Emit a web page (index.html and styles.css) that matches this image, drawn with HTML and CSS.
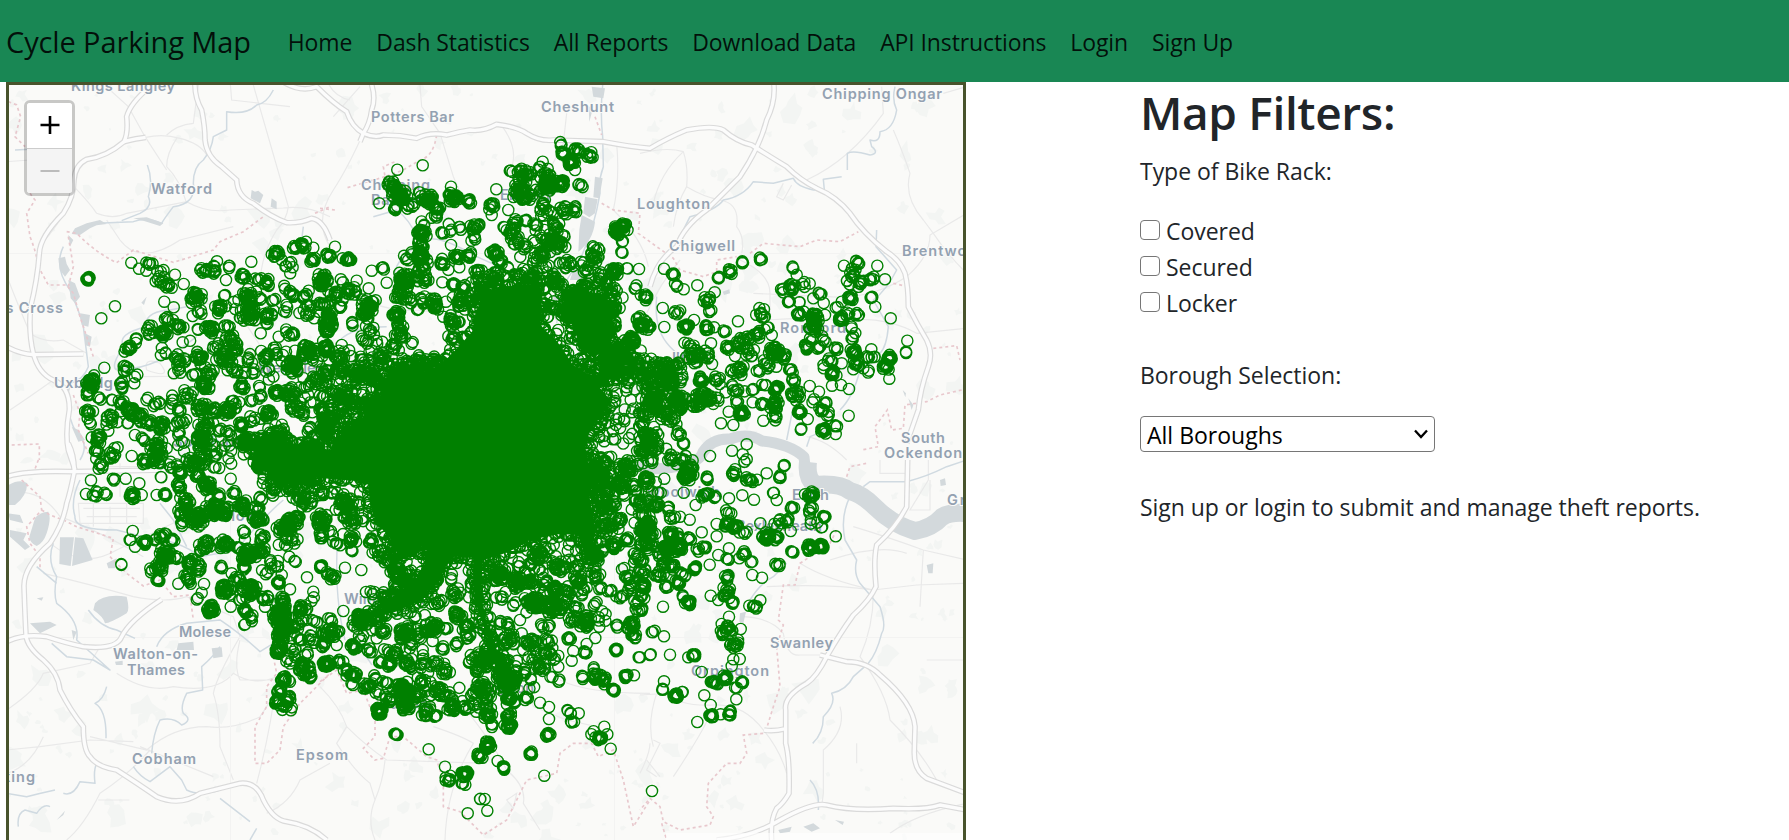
FILE: index.html
```html
<!DOCTYPE html>
<html lang="en">
<head>
<meta charset="utf-8">
<title>Cycle Parking Map</title>
<link rel="stylesheet" href="styles.css">
</head>
<body>
<nav class="navbar">
  <a class="brand">Cycle Parking Map</a>
  <a class="link">Home</a>
  <a class="link">Dash Statistics</a>
  <a class="link">All Reports</a>
  <a class="link">Download Data</a>
  <a class="link">API Instructions</a>
  <a class="link">Login</a>
  <a class="link">Sign Up</a>
</nav>
<main class="content">
  <div class="map">
    <svg class="map-canvas" viewBox="9 85 954 755" width="954" height="755">
      <defs>
        <g id="motorways">
          <g transform="translate(0 80) scale(.33333)">
            <path d="M585 0Q582 50 605 90Q615 140 615 180Q620 230 665 260L710 300Q712 350 760 370Q810 410 860 428Q900 430 935 415Q970 420 990 480"/>
            <path d="M450 20Q390 70 380 110Q385 160 372 185Q320 230 260 238Q225 255 222 300Q222 350 190 400Q120 470 118 520Q112 600 92 680Q85 760 100 820Q115 880 160 900Q210 920 208 990Q195 1060 205 1110L225 1170"/>
            <path d="M372 185Q410 175 437 172M20 800Q60 822 100 824L250 822"/>
          </g>
          <g transform="translate(320 80) scale(.33333)">
            <path d="M-120 0Q-60 40 -10 20Q40 70 80 95Q95 140 130 160Q165 175 190 165Q240 165 290 175Q330 155 380 165Q420 155 450 150Q490 155 530 133Q590 140 620 160Q660 185 700 180L850 185Q930 200 990 205Q1040 175 1100 150Q1180 135 1210 150Q1250 185 1295 195Q1350 230 1400 260Q1440 300 1490 325Q1550 350 1590 400Q1630 460 1700 515Q1740 540 1755 580Q1765 620 1765 680Q1790 730 1820 780Q1840 820 1825 860Q1800 930 1795 990L1760 1090"/>
            <path d="M150 0Q170 50 155 90Q150 130 130 160L120 185M1360 0Q1370 60 1340 120Q1320 200 1260 290Q1210 340 1160 390Q1090 440 1070 500Q1010 540 990 620"/>
          </g>
          <g transform="translate(0 460) scale(.33333)">
            <path d="M205 -50Q225 -10 222 40Q210 100 200 130Q190 190 150 250Q70 320 72 380Q75 470 78 525Q80 560 130 600Q175 640 180 690Q210 750 250 800Q250 870 270 890Q290 920 350 930Q420 975 470 1010Q540 1040 600 1000Q680 980 720 970Q770 965 790 1020Q820 1080 860 1085Q930 1095 980 1140"/>
            <path d="M20 545Q70 520 140 530Q200 550 250 560Q350 570 365 530Q390 480 485 418M20 50Q80 30 220 35L500 30"/>
          </g>
          <g transform="translate(640 460) scale(.33333)">
            <path d="M803 0L800 140Q770 200 710 255Q700 300 708 380Q690 420 640 465Q600 520 560 590Q530 650 500 670Q430 710 437 750L437 850Q450 900 447 1000Q430 1030 410 1045Q390 1080 395 1140M540 585L620 605Q680 605 720 645Q820 730 825 800L823 870Q820 930 860 955L980 1000M230 1140Q340 1130 420 1080Q520 1025 560 1035Q640 1055 760 1045Q860 1050 900 1035L980 1050M372 810Q400 815 437 806"/>
          </g>
        </g>
      </defs>
      <rect class="land" x="9" y="85" width="954" height="755"/>
      <g id="woods" class="woods"></g>

      <g class="minor">
        <g transform="translate(0 80) scale(.33333)">
          <path d="M330 30L385 80L435 170L500 270M500 165Q530 135 580 130L595 15M437 172Q490 160 540 175Q600 190 620 225M760 15L865 380Q860 420 830 450Q780 530 780 620M20 245L90 240M530 175Q500 220 500 260Q540 300 560 370M222 320Q270 370 290 400Q340 420 380 400L560 365Q620 400 690 390L850 384Q920 375 990 410M118 500Q180 430 222 350M320 420L360 480Q420 560 540 480L700 440M25 600Q60 690 90 760Q130 790 190 780L260 820M160 900Q90 950 30 990M430 890L900 885M440 870Q430 830 480 850Q520 900 440 870M560 620Q630 700 700 680Q760 760 800 830M690 0L695 60L870 80"/>
        </g>
        <g transform="translate(320 80) scale(.33333)">
          <path d="M130 160Q80 270 40 330Q-20 420 30 500M300 15L305 80L360 160L400 290L440 380M540 130Q610 220 560 290M740 100L730 190Q690 270 650 340M120 20L40 110M20 0Q40 50 90 60M890 190Q900 300 880 390Q970 480 985 560M60 600Q150 700 300 690Q400 710 480 700"/>
        </g>
        <g transform="translate(640 80) scale(.33333)">
          <path d="M0 220Q80 200 130 215Q145 260 140 320Q110 370 100 440M130 215Q60 280 40 370M140 320Q190 350 240 360Q300 370 290 440Q320 480 300 540Q390 580 390 640V720M725 20L730 100Q630 240 500 300M760 150Q790 220 810 280Q790 350 850 420L880 460Q920 520 970 570M980 400L870 465Q870 530 800 590Q690 660 560 650L340 640M380 720Q500 710 620 720Q740 710 830 760L980 745M430 310L410 350L430 360L455 315M910 40L980 20M500 1070Q560 1080 620 1140M160 1000Q200 930 260 1000M20 700Q60 610 120 540"/>
        </g>
        <g transform="translate(0 460) scale(.33333)">
          <path d="M235 130H430V190H240ZM250 145H420M260 170H410M280 130V200M330 140V190M380 130V190M20 100Q120 80 180 170Q290 210 430 290M150 250Q250 330 350 270L560 170M130 340Q260 370 400 410Q500 430 560 410L700 470L720 530Q650 650 640 700Q660 760 660 860L700 960M350 640Q440 700 520 680Q650 700 700 640Q760 680 830 650M20 750Q110 690 130 640L270 610L300 560M270 830L440 870Q520 800 620 800Q700 810 780 770Q830 700 835 650M20 870L120 860L270 840L400 845M450 870Q390 940 300 1000Q250 1100 200 1140M720 540Q700 620 720 660H840M770 970Q810 820 830 660M800 1060Q870 1030 900 960L990 910M420 860L640 950M20 940Q90 920 130 830"/>
          <path d="M295 1020H388M360 10V110M300 20H480M560 0L620 90L700 110"/>
        </g>
        <g transform="translate(320 460) scale(.33333)">
          <path d="M0 680Q60 740 80 800Q140 860 200 900L500 910M80 800L50 850Q100 930 150 970L165 1020Q140 1080 165 1140M195 900Q190 960 165 1020M340 800Q430 830 460 850Q380 980 375 1140M430 740Q520 850 560 930Q620 980 610 1030L660 1110M720 660Q800 700 990 700M560 1020L590 1000L580 1045ZM960 940Q990 880 990 850M620 660L640 740L740 780L830 800"/>
        </g>
        <g transform="translate(640 460) scale(.33333)">
          <path d="M370 810Q310 730 220 735Q120 740 80 700L0 705M370 810Q420 870 440 940M380 380Q560 370 700 390L830 375L980 370M480 310Q560 360 700 390M300 470Q390 470 430 520Q440 590 480 585H560M700 400Q700 500 660 590Q740 700 750 780Q840 870 890 960M600 740Q620 810 550 870V1000L545 1040M640 200Q740 230 850 270L980 300M570 300Q720 250 800 280M720 0V40H800M865 0V60L810 150H870V60M40 840L60 850L20 930L50 950M20 900L60 950M750 1120Q830 1060 980 1030M50 700Q20 790 40 860M650 850V910M860 600H980M100 950Q200 800 220 740M850 270L840 440"/>
        </g>
      </g>
      <path class="grid" d="M9 253.500H963M9 637.500H963M230.500 460V840M614.500 460V840"/>

      <g class="rivers">
        <g transform="translate(0 80) scale(.33333)">
          <path d="M820 30Q800 70 770 75Q740 105 680 95V150L640 170Q635 210 610 240Q580 260 580 310Q590 370 520 380Q490 420 485 430Q440 410 400 425L290 430L220 455M442 255Q460 300 445 350Q460 380 420 400L365 422M45 210L90 208M910 440L905 480M190 500Q160 560 210 630Q240 700 250 740L265 860Q250 900 210 910Q190 990 230 1060Q270 1090 240 1140M500 690Q430 700 440 740Q350 760 370 800Q330 860 350 870M350 865Q450 880 590 770M510 690L560 680"/>
        </g>
        <g transform="translate(320 80) scale(.33333)">
          <path d="M848 15Q840 100 848 170L850 260Q835 300 840 340Q820 460 770 560Q730 600 720 660L710 730M160 410L230 390Q270 420 290 470M230 640Q200 550 290 500Q320 440 470 530L560 570M60 780Q100 740 200 740M700 980Q800 900 780 830L830 870"/>
        </g>
        <g transform="translate(640 80) scale(.33333)">
          <path d="M765 20Q755 60 770 90Q760 150 720 155Q720 190 690 180L695 200Q720 220 690 225Q640 210 622 220V270M605 290L550 298L553 330H520Q470 320 460 295L400 310L340 305Q310 350 250 360Q230 390 150 410L120 470M710 450L708 500L770 570Q740 630 700 660L745 740Q740 800 720 820L660 870Q640 950 600 990M500 1100L510 1070L560 1050M50 650Q40 750 90 800L130 840M440 1080L460 980"/>
        </g>
        <g transform="translate(0 460) scale(.33333)">
          <path d="M240 60Q210 120 225 170Q220 210 350 210L430 230Q540 240 600 290L710 270Q780 180 850 120M160 250Q140 300 170 350Q160 400 170 430Q240 480 230 540L330 630L280 600L200 590L155 550M265 450Q300 500 350 510L405 535M110 320L170 370M470 560Q490 510 560 490L660 480Q720 520 780 575L820 550M660 560Q640 590 605 620L608 690L560 700Q540 740 550 760Q580 780 545 795Q520 770 480 780Q460 820 455 880M320 680Q310 720 285 730Q320 750 318 835M400 920Q420 950 450 965L510 920L545 960L560 990Q600 1010 660 990M660 1015L750 1085M20 1000L80 1010Q120 1000 165 990M290 910Q280 930 285 970L240 965Q220 1010 190 1000M55 1100Q50 1060 75 1050L110 1060Q130 1030 150 1040M770 1105L750 1140M480 130L520 180L560 260"/>
        </g>
        <g transform="translate(640 460) scale(.33333)">
          <path d="M630 110Q600 170 615 240L650 300Q640 340 660 370L720 440Q740 500 725 520Q710 580 685 610L640 650Q620 690 575 700Q590 730 550 770Q550 820 518 850M510 960Q540 990 535 1050M670 80L690 65H800Q860 50 920 20L980 0M330 420Q360 370 400 350L440 310"/>
        </g>
        <path d="M337 550Q335 600 345 640M355 640L372 665"/>
      </g>

      <g class="water">
        <g transform="translate(0 80) scale(.33333)">
          <path d="M755 330L765 335L775 332L790 345L780 370L752 355ZM815 355L830 365V388L812 380ZM225 445L260 430L300 420L320 432L290 436L270 445L240 465L215 462ZM400 415L440 412L490 430L480 438L430 422ZM175 535L195 530L200 552L210 570L195 590L180 570ZM205 600L225 610L240 650L225 670L212 655ZM240 700L270 705L265 740L245 735ZM255 760L275 770L270 800L255 795ZM440 650L432 675L424 668ZM205 465L220 480L210 500ZM215 1040L235 1050L255 1080L235 1085Z"/>
        </g>
        <g transform="translate(320 80) scale(.33333)">
          <path d="M825 290L848 295L838 355L820 352ZM795 350L833 358L825 400L808 412L790 400ZM785 405L825 425Q820 480 775 515L778 450ZM760 570L790 555L785 600L750 600ZM700 650L730 640L725 700L705 720ZM815 20L855 25L850 55L820 50ZM806 80L820 80L808 125Z"/>
        </g>
        <g transform="translate(640 80) scale(.33333)"><path d="M248 635L268 628L270 640L252 645ZM788 930L798 940L796 952ZM805 955L820 975L815 990Z"/></g>
        <g transform="translate(0 460) scale(.33333)">
          <path d="M25 75Q60 55 82 70Q80 110 45 135H25ZM105 175Q120 155 145 155Q155 175 140 220Q130 250 110 258Q90 250 88 230ZM180 232L222 232L212 318L178 312ZM225 232L250 235L278 300L216 318ZM285 430Q310 400 380 410Q390 450 380 460Q330 490 315 490Q310 470 280 450ZM25 160L60 165L70 190L30 180ZM30 210L80 220L70 240L90 260L75 270L30 230ZM535 550L580 545L582 570H530ZM635 565L665 562L668 590L640 595ZM90 490L150 485L170 495L120 520ZM110 415L130 412L125 422ZM320 310L350 295L345 325L325 325ZM170 1080L195 1052L190 1065ZM215 510L230 515L220 540ZM345 605L368 602V615H348Z"/>
        </g>
        <g transform="translate(640 460) scale(.33333)"><path d="M415 1110L455 1100L450 1115L420 1120ZM490 1100L520 1090L540 1105L515 1115ZM585 1080L612 1085L608 1095ZM860 315L880 310L878 340L865 340ZM900 60L915 55L918 75L902 78ZM300 460L318 455L310 490L298 485Z"/></g>
        <path class="thames" d="M630 465Q655 472 680 466Q700 462 703 452Q712 438 730 439Q748 432 762 441Q790 444 804 457Q806 478 812 483"/>
        <path class="thames wide" d="M808 462Q806 478 815 485Q840 483 850 491Q862 494 875 507Q893 525 915 531Q932 528 942 517Q950 512 965 513"/>
      </g>

      <g class="borders">
        <g transform="translate(0 80) scale(.33333)"><path d="M25 65L50 75L62 110L45 170L75 200M90 340L105 360L80 400L90 470Q110 520 115 560L145 615L200 615L220 640L240 710L280 830M200 455L230 460Q290 520 350 548L400 510L520 547L640 510L660 485L730 455L790 410M205 470L220 560L205 620M945 400L990 380M220 945L240 1000L235 1050L265 1120M35 1095L118 1092V1140"/></g>
        <g transform="translate(320 80) scale(.33333)"><path d="M350 165Q340 230 300 240L250 270L195 290L190 260L225 245M195 290L75 325M0 385L45 390M825 110L845 165M845 370L880 390L960 400L955 460L1010 500L1060 535L1080 570L1150 590L1190 575V540L1250 530M1290 520L1330 490L1440 500L1490 480L1560 485L1615 455M1720 610L1755 618"/></g>
        <g transform="translate(640 80) scale(.33333)"><path d="M880 805L950 797L960 840M965 930L900 945L860 965L795 975L790 1045L755 1050L742 990L705 1040L715 1100L665 1110"/></g>
        <g transform="translate(0 460) scale(.33333)"><path d="M65 60L120 110L125 150L80 200L90 250L120 290V330M125 150L150 165L190 180L230 200L340 235L330 290L380 340L430 378L480 360L520 410L570 405L580 480M115 0L100 40M820 590L830 640L800 680L800 740L765 800V910L800 910L840 870L850 800L900 730L990 640"/></g>
        <g transform="translate(320 460) scale(.33333)"><path d="M0 665L50 630L80 700L130 690L165 780L165 830L130 865L165 900L190 895L210 830L250 830L320 890L350 900L370 960V1040L420 1055L490 1125L560 1080L620 960L710 940L720 880L760 850L815 850L835 890L880 870L910 960L940 1100L990 1020"/></g>
        <g transform="translate(640 460) scale(.33333)"><path d="M620 50L630 20L680 10M590 210L570 250L480 310L465 375L430 375L415 480L430 495L410 560L420 680L400 740L380 805L370 820L310 825L320 880L300 910L260 910L205 970L200 1040L220 1070L210 1095L120 1110L70 1085L60 1040L30 1015L0 1050M65 1090L80 1140"/></g>
      </g>

      <use href="#motorways" class="road-case"/>
      <use href="#motorways" class="road-fill"/>

      <g class="labels">
        <text x="71" y="91" textLength="104">Kings Langley</text>
        <text x="371" y="122" textLength="83">Potters Bar</text>
        <text x="541" y="112" textLength="73">Cheshunt</text>
        <text x="822" y="99" textLength="120">Chipping Ongar</text>
        <text x="151" y="194" textLength="61">Watford</text>
        <text x="361" y="190" textLength="69">Chipping</text>
        <text x="371" y="205" textLength="50">Barnet</text>
        <text x="500" y="200" textLength="50">Enfield</text>
        <text x="637" y="209" textLength="73">Loughton</text>
        <text x="669" y="251" textLength="66">Chigwell</text>
        <text x="902" y="256" textLength="84">Brentwood</text>
        <text x="-54" y="313" textLength="117">Gerrards Cross</text>
        <text x="54" y="388" textLength="68">Uxbridge</text>
        <text x="258" y="373" textLength="66">Wembley</text>
        <text x="173" y="447" textLength="66">Southall</text>
        <text x="672" y="363" textLength="36">Ilford</text>
        <text x="780" y="333" textLength="66">Romford</text>
        <text x="901" y="443" textLength="44">South</text>
        <text x="884" y="458" textLength="78">Ockendon</text>
        <text x="183" y="521" textLength="74">Hounslow</text>
        <text x="646" y="497" textLength="74">Woolwich</text>
        <text x="792" y="500" textLength="37">Erith</text>
        <text x="736" y="531" textLength="86">Bexleyheath</text>
        <text x="947" y="505" textLength="90">Gravesend</text>
        <text x="344" y="604" textLength="80">Wimbledon</text>
        <text x="179" y="637" textLength="52">Molese</text>
        <text x="113" y="659" textLength="85">Walton-on-</text>
        <text x="127" y="675" textLength="58">Thames</text>
        <text x="770" y="648" textLength="63">Swanley</text>
        <text x="691" y="676" textLength="78">Orpington</text>
        <text x="472" y="693" textLength="62">Croydon</text>
        <text x="380" y="709" textLength="48">Sutton</text>
        <text x="132" y="764" textLength="64">Cobham</text>
        <text x="296" y="760" textLength="52">Epsom</text>
        <text x="-23" y="782" textLength="58">Woking</text>
      </g>
      <path id="core" class="core"/>
      <path id="racks" class="racks"/>
      <rect class="credit" x="666" y="833" width="297" height="7"/>
    </svg>
    <div class="zoom">
      <button class="zoom-btn"><svg width="20" height="20" viewBox="0 0 20 20"><path d="M.5 10H19.5M10 1V19"/></svg></button>
      <button class="zoom-btn off"><svg width="20" height="20" viewBox="0 0 20 20"><path d="M.5 10H19.5"/></svg></button>
    </div>
  </div>
  <section class="filters">
    <h2 class="title">Map Filters:</h2>
    <p class="caption">Type of Bike Rack:</p>
    <div class="options">
      <label class="option"><input class="box" type="checkbox"><span>Covered</span></label>
      <label class="option"><input class="box" type="checkbox"><span>Secured</span></label>
      <label class="option"><input class="box" type="checkbox"><span>Locker</span></label>
    </div>
    <p class="caption borough">Borough Selection:</p>
    <div class="select"><span>All Boroughs</span><svg width="14" height="10" viewBox="0 0 14 10"><path d="M1 1.5L7 8L13 1.5"/></svg></div>
    <p class="caption note">Sign up or login to submit and manage theft reports.</p>
  </section>
</main>
<script src="map.js"></script>
</body>
</html>
```

FILE: styles.css
```css
* { box-sizing: border-box; }
body { margin: 0; height: 840px; overflow: hidden; background: #fff; color: #212529; font-family: "Open Sans", "Noto Sans", sans-serif; font-size: 23px; line-height: 36px; }
.navbar { display: flex; align-items: center; height: 82px; padding: 1px 0 0 6px; background: #198754; color: rgba(0, 0, 0, .88); white-space: nowrap; }
.brand { font-size: 29px; margin-right: 37px; letter-spacing: -.12px; }
.link { margin-right: 24px; letter-spacing: -.11px; }
.content { display: flex; height: 758px; }
.map { position: relative; flex: none; width: 960px; height: 780px; margin-left: 6px; border: 3px solid #48532c; overflow: hidden; }
.map-canvas { display: block; }
.land { fill: #fafaf8; }
.woods { fill: #f3f5f3; }
.minor { fill: none; stroke: #e9e9e9; stroke-width: 3.5; }
.grid { fill: none; stroke: #f3f3f2; }
.rivers { fill: none; stroke: #d0dae1; stroke-width: 4.5; stroke-linejoin: round; }
.rivers > path { stroke-width: 1.4; }
.water { fill: #d3d9dc; }
.water .thames { fill: none; stroke: #d3d9dc; stroke-width: 11; stroke-linejoin: round; }
.water .wide { stroke-width: 18; }
.borders { fill: none; stroke: #e8c8cd; stroke-width: 5; stroke-dasharray: 9 9; }
.road-case { fill: none; stroke: #dadada; stroke-width: 17; }
.road-fill { fill: none; stroke: #fcfcfc; stroke-width: 10; }
.labels { font-family: "Inter", "Open Sans", sans-serif; font-size: 14.5px; font-weight: 600; fill: #93a1b1; stroke: #fafaf8; stroke-width: 2px; paint-order: stroke; }
.core { fill: #008000; }
.racks { fill: none; stroke: #008000; stroke-width: 1.4; }
.credit { fill: #fff; fill-opacity: .6; }
.zoom { position: absolute; left: 15px; top: 15px; width: 51px; height: 96px; border: 3px solid rgba(0, 0, 0, .2); border-radius: 6px; background-clip: padding-box; display: flex; flex-direction: column; overflow: hidden; }
.zoom-btn { flex: 1; display: grid; place-items: center; border: 0; padding: 0; background: #fff; }
.zoom-btn svg { fill: none; stroke: #000; stroke-width: 2.6; }
.zoom-btn.off { background: #f4f4f4; border-top: 1px solid #ccc; }
.zoom-btn.off svg { stroke: #bbb; stroke-width: 2; }
.filters { margin-left: 174px; white-space: nowrap; }
.title { margin: 1px 0 0; font-size: 46px; font-weight: 600; line-height: 58px; letter-spacing: -.35px; }
.caption { margin: 12px 0 0; line-height: 36px; letter-spacing: -.04px; }
.options { margin-top: 24px; }
.option { display: flex; align-items: center; height: 36px; gap: 6px; letter-spacing: -.04px; }
.box { appearance: none; width: 20px; height: 20px; margin: 0 0 3px; border: 1px solid #767676; border-radius: 4px; background: #fff; }
.borough { margin-top: 36px; }
.select { display: flex; align-items: center; justify-content: space-between; width: 295px; height: 36px; margin-top: 23px; padding: 2px 6px 0; border: 1px solid #767676; border-radius: 4px; color: #000; }
.select svg { fill: none; stroke: #000; stroke-width: 2.3; margin-bottom: 2px; }
.note { margin-top: 37px; }
```

FILE: map.js
```js
let seed = 20231;
const rnd = () => { seed = (seed * 1664525 + 1013904223) >>> 0; return seed / 4294967296; };
const gauss = () => (rnd() + rnd() + rnd() - 1.5) * 1.3;

// Solid central area, where the rack markers merge completely.
const core = [493,290,507,286,535,284,543,290,541,310,540,325,560,345,573,365,590,375,601,374,600,355,584,346,573,330,569,312,573,300,584,292,600,293,610,301,614,312,610,335,612,350,618,372,600,388,612,402,600,415,590,430,585,450,590,470,600,478,598,485,588,492,596,530,592,550,585,556,578,535,560,534,530,540,517,548,500,555,483,560,480,590,487,625,497,650,512,668,512,680,504,685,499,668,486,655,488,640,475,600,473,575,474,558,455,556,430,585,423,600,395,612,358,622,357,618,380,610,390,598,415,585,430,565,427,550,418,545,405,553,397,548,390,538,376,522,370,505,368,482,320,478,290,476,274,470,262,460,250,447,255,441,275,440,330,450,336,436,350,432,362,420,370,402,386,392,394,372,430,371,450,356,472,332,476,310,485,300];
const poly = [];
for (let i = 0; i < core.length; i += 2) poly.push([core[i], core[i + 1]]);
const inside = (x, y, p) => {
  let c = false;
  for (let i = 0, j = p.length - 1; i < p.length; j = i++) {
    if ((p[i][1] > y) !== (p[j][1] > y) && x < (p[j][0] - p[i][0]) * (y - p[i][1]) / (p[j][1] - p[i][1]) + p[i][0]) c = !c;
  }
  return c;
};
document.getElementById("core").setAttribute("d", "M" + poly.map(p => p.join(" ")).join("L") + "Z");

let d = "";
const ring = (x, y) => { d += `M${(x - 5.6).toFixed(1)} ${y.toFixed(1)}a5.6 5.6 0 1 0 11.2 0a5.6 5.6 0 1 0 -11.2 0`; };

// Ragged rim of the solid area.
for (let i = 0; i < poly.length; i++) {
  const a = poly[i], b = poly[(i + 1) % poly.length];
  const n = Math.ceil(Math.hypot(b[0] - a[0], b[1] - a[1]) / 2.4);
  for (let k = 0; k < n; k++) ring(a[0] + (b[0] - a[0]) * k / n + gauss() * 3.5, a[1] + (b[1] - a[1]) * k / n + gauss() * 3.5);
}

// Areas of medium density: polygon and marker count.
const areas = [
  ["360,485 400,540 440,545 520,550 540,570 510,580 475,570 440,590 395,590 380,560 350,520", 60],
  ["365,600 430,590 468,580 480,640 455,645 430,630 400,640 360,640", 20],
  ["330,630 360,625 450,640 450,655 400,650 340,655", 8],
  ["375,660 450,660 450,680 490,700 460,715 400,705 360,690", 18],
  ["490,565 600,565 600,575 565,600 600,610 590,625 560,600 530,615 500,600", 22],
  ["500,630 560,635 555,690 520,690 500,650", 12],
  ["240,450 280,475 320,485 360,500 350,540 320,530 290,500 260,495", 12],
  ["180,430 240,430 240,470 180,465", 22],
  ["320,345 360,330 385,360 390,380 350,400 330,420 310,440 300,390", 50],
  ["360,362 430,360 380,400 330,430 310,440 330,400", 110],
  ["575,395 640,405 655,425 650,470 620,475 590,460 580,440", 75],
  ["610,340 640,350 672,372 682,400 640,405 600,390", 70],
  ["465,270 560,265 570,300 545,320 480,310", 55],
  ["530,215 560,220 560,285 525,280", 20],
  ["600,480 655,475 660,500 640,520 610,540", 22],
  ["240,350 320,340 330,400 250,430 230,400", 14],
  ["130,320 240,340 240,430 180,420 130,400", 8],
  ["540,540 610,540 600,575 550,570", 26],
  ["545,465 600,480 598,540 560,540", 40]
];
for (const [s, n] of areas) {
  const p = s.split(" ").map(q => q.split(",").map(Number));
  const xs = p.map(q => q[0]), ys = p.map(q => q[1]);
  const x0 = Math.min(...xs), x1 = Math.max(...xs), y0 = Math.min(...ys), y1 = Math.max(...ys);
  for (let k = 0, t = 0; k < n && t < 9000; t++) {
    const x = x0 + rnd() * (x1 - x0), y = y0 + rnd() * (y1 - y0);
    if (inside(x, y, p)) { ring(x, y); k++; }
  }
}

// Marker groups per map tile, in thirds of a pixel: x, y, count, spread.
const tiles = [
  [0, 80, `394 548;417 566;450 555 6 14;480 572 3 8;525 584;478 600 6 14;500 613 9 12;551 612;493 665;521 682;265 597 9 6;345 679;304 715;586 650 22 13;598 688 4 9;578 708;614 576 10 9;645 568 7 11;651 544;688 560 3 8;678 600;755 546 2 3;728 588 8 7;770 598 4 9;800 608 7 9;828 520 12 7;845 540;872 562 6 14;885 502 5 7;908 495 10 8;940 503;918 485;938 545 9 9;986 526 5 5;657 686 14 12;678 645 2 5;708 660 2 5;706 687;748 650 20 15;746 700 35 15;722 715 2 4;780 655 3 8;826 650 3 14;848 625 2 6;875 642 9 10;910 646 8 10;960 605 14 16;852 685 5 12;925 692 14 16;970 670 4 10;808 706 12 12;800 730 2 5;782 760;836 770;868 760 5 12;880 765 4 6;985 710 10 10;984 745 9 9;975 800 9 12;925 815 32 17;885 812;505 717 5 8;536 735 10 11;490 758 22 10;452 750 9 12;410 778 5 4;382 805 10 10;548 787;488 815 4 8;540 840 14 13;594 745 2 4;630 745 16 10;683 740 5 10;597 830 16 11;645 800 5 10;688 780 12 12;672 830 26 17;700 800 10 12;540 868 4 7;582 885 4 7;746 835 5 9;760 878 4 10;730 880 3 10;700 870 8 12;625 885 10 12;615 915 18 12;560 945 6 12;570 940 4 7;800 830 10 13;830 815 7 12;805 865 3 7;880 860 30 15;725 922 12 10;780 925 2 5;780 950 3 7;754 962 2 4;828 938 12 8;868 940 24 17;885 985 14 12;910 1003 3 6;910 920 5 14;945 900 10 10;967 950 2 4;965 990 8 8;925 1048 4 10;980 1040 20 18;313 863;375 868 7 9;408 886 2 6;365 905 3 5;368 925 5 5;403 910;275 905 26 12;265 940 5 8;298 953 3 5;264 992 8 9;270 1025 3 8;335 960 3 7;365 970 7 9;385 990 16 13;330 1015 12 16;420 1010 12 12;382 1030 2 4;325 1052;292 1078 14 11;290 1112 5 6;348 1100 3 6;335 1125 9 9;443 957 2 3;462 975 3 8;482 965 3 7;518 957 2 4;510 980 2 6;540 990 6 9;450 1025 8 12;485 1038 16 10;530 1025 4 12;555 1025 4 9;605 985 15 13;645 990 10 12;688 990 22 13;700 965 4 9;615 1040 20 15;605 1085 32 18;655 1050 3 6;683 1055 4 9;540 1065 3 8;405 1065;430 1078 5 8;475 1100 22 15;470 1130 14 13;395 1128;535 1095;650 1125 2 5;600 1130 14 12;685 1100 4 10;755 1020 6 10;725 1038 10 11;805 1000 16 12;735 1080 30 16;785 1090 32 18;840 1070 40 25;930 1110 50 25`],
  [320, 80, `232 269;308 256;178 370;220 318 25 13;240 350 22 14;227 387 8 6;270 375 6 12;294 340 2 6;325 355 22 14;350 385 12 11;345 408 4 8;393 320;400 353 22 11;447 366 7 6;529 328;518 376 10 10;515 405;565 390;575 277 3 8;612 285 22 16;600 335 25 14;625 345 12 14;668 245;668 265 4 11;680 290 18 14;682 320 26 14;660 330 6 10;725 310 20 10;722 190 3 6;730 220 6 10;771 210 9 9;752 248 18 9;808 225 9 8;765 270;781 315 5 9;670 375 10 10;663 398 3 8;690 395 4 8;730 390 10 10;765 390 7 9;705 440 10 9;310 430 3 6;303 460 20 12;303 490 10 11;303 530 30 10;308 560 14 12;316 597 9 12;368 460 3 5;385 430 2 4;392 455 2 5;417 448 4 6;464 440 10 9;478 434 2 5;393 495;458 470 4 8;365 550 12 13;413 532 10 9;450 525 7 8;418 562;258 535 4 7;275 520 2 5;550 440 2 5;573 450 12 12;585 425 5 8;615 422 4 6;650 438 3 4;585 485 9 13;526 520 17 10;540 545 7 12;563 562 2 6;618 500 6 10;600 530 2 3;636 548 2 5;665 525 17 14;690 480 18 20;720 490 12 15;735 465 3 8;738 555 12 12;600 590 8 10;825 530 16 10;830 505 5 9;800 560 9 12;783 545;840 590 11 13;883 575 18 8;905 485 2 4;902 518 2 3;893 455 22 9;910 440 20 9;923 565 2 4;957 567;475 575 8 9;400 612 7 7;435 622 7 8;367 607;415 662 12 12;485 610 12 14;520 595 20 20;378 665;255 600 30 15;240 640 16 14;290 600 6 10;265 655 5 9;305 660 6 10;340 665 10 11;347 680 12 8;290 690 3 6;232 705 16 10;236 740 8 11;242 768 12 12;280 787 2 4;225 800 9 9;155 572;190 568 4 6;200 608;146 625;110 602;65 605 3 6;45 500;30 528 4 3;85 537 12 10;10 600 16 12;50 645 14 14;90 635 14 12;60 682 3 6;15 675 7 9;150 675 25 14;140 700 22 12;98 730 3 6;25 725 17 10;25 755 5 8;160 760 9 17;135 785 4 8;170 785 2 5;20 800 7 8;58 830 12 10;92 828;65 795;125 835 3 7;185 835 15 13;118 885 26 15;150 890 16 12;10 880 12 17;60 870 15 17;20 910 3 7;65 945 16 13;8 950;100 975 12 10;68 990 4 8;10 990 5 8;30 1020 16 11;85 1050 16 14;20 1060 12 13;370 710;400 725 18 12;395 770 8 8;440 660 18 20;485 650 24 20;300 840 16 14;340 850 18 15;640 590 18 15;700 600 16 9;720 630;700 680 14 12;683 713 2 3;715 750;750 772 2 4;790 620 14 13;760 640 20 14;860 620 18 14;890 650 8 13;885 740 4 6;865 760 15 15;930 780 28 13;955 850 10 13;945 620 3 5;970 650 6 8;950 715 5 6;965 735 9 9;985 740 4 6;780 845 7 10;805 860 4 8;745 700 26 18;800 780 18 16;750 660 20 18;870 690 20 16;860 840 30 25;900 820 30 25;920 870 30 25;250 870 30 22;200 920 35 22;160 980 35 22;130 1040 35 22`],
  [640, 80, `72 566;99 583 5 4;108 615 3 4;131 628;172 616;235 594 4 4;270 571 7 7;309 546 5 4;361 541 4 5;224 637;204 655 8 9;208 688 3 5;15 654 4 5;68 684;10 735 12 12;73 741;113 703 5 9;140 743 12 8;162 720;200 742 8 9;222 742;213 790;294 724;364 697 8 10;378 710 2 7;385 745 3 8;352 765 9 12;395 765;250 760 3 9;150 795 6 10;165 830 26 16;200 825 7 10;216 852;262 800 7 9;300 795 14 15;330 815 8 12;285 828;405 815 28 13;435 827 7 9;385 850 7 11;409 860;355 873 3 4;325 775 5 10;298 870 12 12;275 870 3 7;232 902 8 8;180 895 12 11;190 950 32 15;170 970 14 12;225 960 5 8;257 937;293 928 9 12;290 965 3 6;340 928 3 6;372 915 3 8;410 925 14 7;403 975 22 13;370 972 4 7;405 1012 5 6;370 1022;338 967;303 1000 22 8;266 995;243 1030;280 1035;455 870 4 7;462 900 6 9;470 945 12 13;509 918;537 935;455 945 2 6;478 993 12 7;503 1017;482 1048 3 3;520 960 2 6;555 965 3 6;547 988 5 8;565 1003 3 6;552 1050 15 7;588 1040 3 8;587 1062;626 1007;459 562 3 5;470 584;430 630 5 9;457 620 10 9;498 613 4 8;442 663 4 5;476 665 2 4;536 640 4 7;520 655;551 669;472 704 6 6;490 700 2 6;522 715 20 10;520 740 18 11;500 800 8 7;515 780 4 6;550 775 4 8;540 800 4 7;555 705;587 685 2 5;612 557;652 548 5 5;712 557;640 578 12 9;660 608 9 7;695 592 5 8;735 598;620 605 3 6;630 655 12 8;605 665;694 650 5 6;706 680;650 703 4 6;628 705 3 8;602 716 11 8;633 743 2 4;640 770 4 8;643 815 18 9;648 850 8 8;680 830 3 7;700 830 3 6;694 808;640 868;670 865;685 875 2 4;752 715;802 782;799 818 4 3;748 835 14 7;738 862 12 7;748 896;588 805 4 7;570 845 5 10;578 880 14 8;550 860 2 5;576 917;603 915;627 927;605 850;45 860 8 15;75 860 14 14;105 860 12 13;25 900 26 25;80 900 45 18;40 960 50 20;110 965 40 18;10 1000 12 14;130 895 4 10;75 1000 18 14;100 1020 6 10;10 1030 5 8;30 1070 20 15;15 1100 22 17;60 1105 8 14;115 1067 5 7;132 1092 3 5;90 1130 4 8;130 1135 7 10;210 1128;276 1112;320 1093;308 1123;320 1138;432 1155 2 4`],
  [0, 460, `273 61;258 102;285 102 5 7;318 104 3 5;300 15 7 12;340 58 3 6;377 56;418 70;398 107 12 8;425 105;435 5 10 10;470 0 8 10;485 48 2 5;515 15 6 11;540 35 9 7;540 80 12 9;580 10 16 14;592 45 7 8;615 75 18 12;645 25 2 4;692 56;700 98 5 7;470 105;495 105 7 6;555 130 16 12;550 155 10 13;545 190 4 7;590 175 45 17;640 150 35 17;670 155 20 14;655 110 6 9;728 135 22 12;770 145 7 9;782 115 4 7;772 180 25 11;398 213;393 237 2 5;405 260;435 247 10 7;465 238 2 5;490 225 8 13;520 235 5 9;498 285 32 12;525 290 4 8;475 320 16 10;455 332 3 6;473 358 5 4;363 313 2 2;535 371;615 250 12 13;605 270 5 7;672 255 18 11;570 310 14 11;595 325 10 10;563 350 8 9;570 370 3 6;612 372;590 415 2 4;605 398;663 320 4 6;630 447 22 9;675 390 28 11;710 360 9 8;692 440;695 340;735 225 4 9;715 260 5 6;750 285 38 15;785 270 14 12;790 230 7 12;855 200 38 15;885 180 20 12;860 240 10 14;880 240 3 8;730 325 6 9;820 320 8 12;795 335 4 9;838 367 8 6;868 290;882 303 2 4;845 345;870 388;921 352;962 320 4 3;985 340 4 7;750 390 38 16;720 415 3 8;798 415 7 8;795 440;735 450 10 6;750 475 5 7;737 493 2 5;940 395;935 418 2 5;848 425 14 13;840 465 65 14;850 500 45 14;845 530 20 12;835 570 26 9;905 445 14 12;900 480 8 14;880 500 8 14;945 485 4 6;900 540 6 9;930 540 7 9;975 525 6 10;970 555 4 8;985 475;918 583 3 5;880 575 7 10;865 600 4 8;905 620 12 10;920 635 12 12;930 652 5 6;975 612 16 6;852 655 14 8;870 665;840 690 10 8;832 724 12 6;865 718 12 9;855 740 6 9;878 745 2 4;905 120 16 14;930 120 6 10;965 100 6 8;960 180 28 14;965 230 4 8;830 90 6 12;870 75 18 16;810 70 12 15;780 15 14 12;840 40 30 20;930 60 30 20;780 0 30 20;840 0 40 25;900 20 50 30`],
  [320, 460, `75 323;124 330;40 352 8 8;5 320 4 5;5 230 4 5;30 215 3 8;50 250 5 7;95 235 12 10;95 272 3 5;85 165 14 14;75 130 30 18;120 128 4 6;40 95 4 8;10 100 3 6;100 190 7 12;150 245 7 11;180 280 12 13;210 300 12 14;230 335 20 14;260 345 12 13;138 396;160 400 4 9;225 385 8 9;265 385 12 12;195 410 12 12;70 453;130 480 30 11;170 470 12 12;30 480 3 8;42 515 16 12;10 520 4 10;15 550 3 6;50 555;102 560 10 8;110 500 4 8;125 525 3 7;150 568 5 7;190 513 9 9;170 535;255 520 30 13;335 505 30 17;300 520 10 12;270 550 6 10;308 570;230 580 8 9;210 575 4 9;210 610 9 10;180 610 5 8;265 610 12 10;310 605 8 12;345 610 9 12;375 635 9 9;365 565 5 7;410 550 4 7;380 505 5 9;415 465 14 10;400 405 10 14;355 430 6 10;440 500 8 10;450 530 5 6;435 520 4 8;22 612 18 8;60 605 5 8;85 635 9 10;100 645 12 8;97 675 2 4;142 675 14 10;165 650 4 10;173 698 3 6;200 665 4 8;245 690 38 17;255 740 28 12;180 755 26 8;210 710 9 11;290 705 12 12;310 665 10 13;350 690 16 14;385 710 8 12;395 740 22 10;430 738 7 9;318 755 14 9;350 766 4 5;455 700 4 5;470 740 5 10;485 680 20 14;500 710 9 10;500 740 6 12;505 765 14 9;512 795 4 5;490 600 32 16;470 630 9 12;455 600 4 8;545 640 16 10;555 680 14 12;575 660 42 14;565 720 14 9;585 725 4 6;563 765 9 9;565 800 14 10;620 717 4 5;660 728;687 741;687 777;633 660 2 4;660 620 14 12;645 595 8 16;685 575 8 14;715 620;690 652 2 5;720 662 3 5;715 587;760 573;755 602;795 580 5 6;800 552;826 534;746 535 6 5;600 480;540 485 4 5;560 495 5 6;565 540 18 14;605 520;630 545 16 12;685 540 4 7;690 495 3 6;665 495 3 8;580 430 3 8;538 410 4 6;492 385 2 5;495 412 2 4;495 350 4 9;625 365 16 10;590 365 28 14;540 345 28 15;640 430 45 15;690 440 34 15;720 440 14 12;680 365 7 8;705 390 26 10;740 395 14 12;775 360 12 10;790 390 8 11;822 345 6 9;845 388 3 6;870 395 3 8;900 410 5 8;770 443 6 6;823 435 4 7;855 455 2 6;845 475 3 8;797 485 22 12;760 480 9 12;838 500;890 497 4 4;935 495 18 10;942 525 6 7;950 425 5 7;948 455 3 6;889 570 7 5;956 592;990 585;928 380 7 8;925 350 8 10;970 380 7 7;960 335 6 8;950 300 8 13;910 320 2 5;885 260 18 10;920 240 7 8;850 270 3 8;855 200 18 14;820 290 26 16;770 320 7 12;720 320 20 15;900 178 10 9;887 133 3 6;955 125 6 7;985 120 4 6;970 170 4 7;970 210 14 11;990 260 10 12;915 25 30 15;900 75 24 12;950 80 6 12;975 50 5 10;790 650 3 5;830 650 20 12;855 660 8 8;822 625 3 6;918 650 7 7;942 646;885 688 7 7;750 755 4 7;757 780 3 6;776 760;817 818 2 4;853 800;862 823;837 835 14 7;872 866;228 825 6 4;326 868;504 855 22 8;480 888 9 6;533 903;552 923 7 4;633 880 8 5;684 825 9 7;375 920;385 957 8 7;437 942 18 8;434 970 3 5;673 947;480 1016 2 3;494 1017;443 1060;502 1052;610 640 5 10;545 600 10 12;520 320 8 14;300 270 5 10;340 290 14 10;250 250 40 25;370 250 35 20;330 350 40 20;290 380 35 18;650 280 35 22;850 130 35 25;840 30 40 25;850 80 30 20`],
  [640, 460, `36 993;32 583;90 584;72 529;41 519 3 4;69 440;0 592;72 664;67 687 3 4;110 707 18 7;128 697 2 4;162 587 12 5;145 592;185 636;193 706;172 786;212 735;215 765 11 6;242 763;272 760 8 7;289 718;308 666 5 4;290 680 2 4;253 655 10 8;225 670 7 8;213 665 2 5;275 618;280 598;299 597;290 550 9 10;270 553 2 4;302 507;262 510 12 10;248 518 7 6;267 470;245 492;145 427 14 7;128 410 3 5;80 380 4 6;115 370 10 6;95 320 12 8;65 340 6 9;50 350 3 5;130 345 5 8;165 328 10 7;209 314;15 375 8 9;5 410 4 7;3 450 5 6;212 407;235 420;258 395 14 11;262 350 7 7;280 428 5 5;342 440 8 6;361 421;328 437;337 345;366 353;310 278 6 8;336 305 2 4;262 295 3 5;235 285;267 265;298 295;414 312 5 6;459 275 4 4;510 265 16 8;543 260 18 8;587 229;548 203 2 4;550 171 5 4;520 180 3 8;510 148 7 9;512 105 14 7;495 103;458 142 6 6;452 213;443 182 6 6;415 190 5 9;380 230 20 10;410 235 8 7;361 190;410 120;401 98 2 4;342 119;307 106;267 115;380 40;345 58 3 8;420 47 4 5;434 16;315 3 2 5;282 40 7 8;322 55 7 6;202 54 5 4;143 45 40 12;150 20 12 14;73 56;60 100 3 7;20 60 10 10;48 135 10 8;80 145 3 7;95 175 5 7;120 170;149 179;167 135;131 98;195 103 10 10;220 105 3 8;230 192;263 155 4 7;262 195 14 8;285 200 12 7;305 220 4 8;320 215;230 229;185 217;145 232 4 6;115 230 5 8;90 225 14 10;85 265 28 12;118 262 26 10;60 290 5 8;175 270 3 7;195 264 6 5;18 200 18 12;30 235 12 12;8 245 8 10;5 300 5 8;5 130 6 9;5 335 4 7;25 180 4 8;70 310 5 9;35 0 5 9;100 0 6 10`]
];
for (const [ox, oy, list] of tiles) {
  for (const item of list.split(";")) {
    const [x, y, n = 1, s = 0] = item.trim().split(" ").map(Number);
    for (let k = 0; k < n; k++) ring(ox + (x + gauss() * s) / 3, oy + (y + gauss() * s) / 3);
  }
}
document.getElementById("racks").setAttribute("d", d);

// Faint woodland patches scattered over the base map.
let w = "";
for (let i = 0; i < 650; i++) {
  const x = 9 + rnd() * 954, y = 85 + rnd() * 755, r = 2 + rnd() * rnd() * 14;
  for (let k = 0; k < 9; k++) {
    const a = k * .7, q = r * (.35 + rnd() * .9);
    w += (k ? "L" : "M") + (x + Math.cos(a) * q).toFixed(1) + " " + (y + Math.sin(a) * q).toFixed(1);
  }
  w += "Z";
}
const woods = document.createElementNS("http://www.w3.org/2000/svg", "path");
woods.setAttribute("d", w);
document.getElementById("woods").appendChild(woods);
```
